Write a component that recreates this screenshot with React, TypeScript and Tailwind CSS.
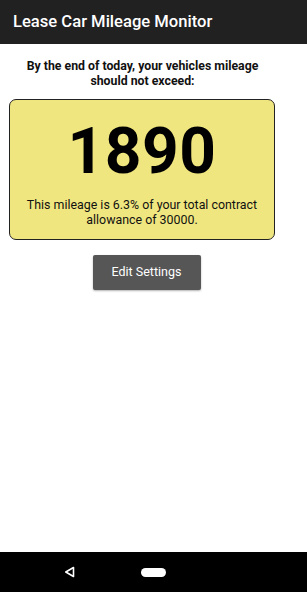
export default function App() {
  return (
    <div className="flex h-[592px] w-[307px] flex-col bg-white font-['Roboto',sans-serif]">
      {/* app bar */}
      <div className="flex h-[44px] items-center bg-[#212121] pl-[13px] pt-[1px]">
        <span className="text-[16.6px] font-medium text-white">Lease Car Mileage Monitor</span>
      </div>

      <div className="flex flex-1 flex-col">
        <p className="mt-[15px] w-[285px] text-center text-[12.3px] font-bold leading-[15px] text-[#111]">
          By the end of today, your vehicles mileage
          <br />
          should not exceed:
        </p>

        <div className="ml-[9px] mt-[10px] flex h-[141px] w-[266px] flex-col items-center rounded-[7px] border-[1.5px] border-[#222] bg-[#f0e67f]">
          <div className="mt-[14px] text-[64px] font-bold leading-[75px] tracking-[0.5px] text-black">1890</div>
          <p className="mt-[8px] text-center text-[12.4px] leading-[15px] text-[#111]">
            This mileage is 6.3% of your total contract
            <br />
            allowance of 30000.
          </p>
        </div>

        <div className="mt-[15px] flex w-[293px] justify-center">
          <button className="h-[35px] w-[108px] rounded-[2px] bg-[#565656] text-[12.5px] text-white shadow-[0_1px_2px_rgba(0,0,0,0.3)]">
            Edit Settings
          </button>
        </div>
      </div>

      {/* nav bar */}
      <div className="flex h-[40px] items-center bg-black">
        <div className="ml-[63px] flex w-[12px] justify-center">
          <svg width="11" height="12" viewBox="0 0 11 12">
            <path d="M9.5 1.5 L1.8 6 L9.5 10.5 Z" fill="none" stroke="white" strokeWidth="1.6" strokeLinejoin="round" />
          </svg>
        </div>
        <div className="ml-[66px] h-[9px] w-[25px] rounded-full bg-white" />
      </div>
    </div>
  )
}
